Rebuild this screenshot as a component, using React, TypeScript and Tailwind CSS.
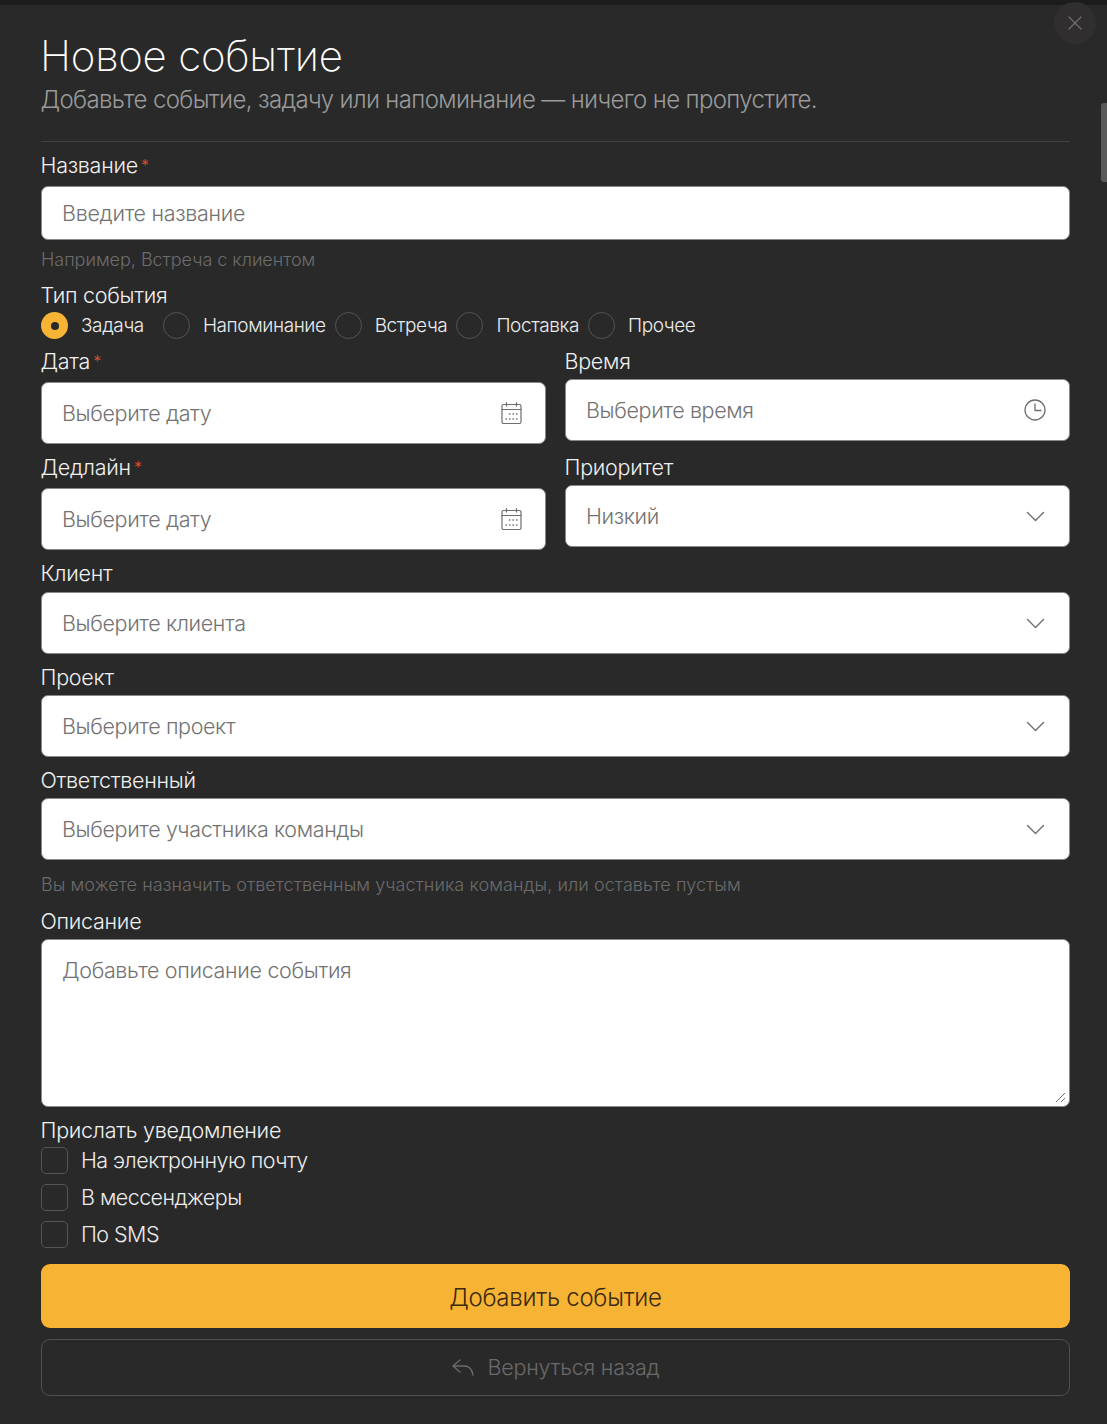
import React from "react";

const Chevron = () => (
  <svg width="20" height="12" viewBox="0 0 20 12" fill="none" stroke="#6f6f6f" strokeWidth="1.4" strokeLinecap="round" strokeLinejoin="round">
    <path d="M1.5 2.5l8 8 8-8" />
  </svg>
);

const Calendar = () => (
  <svg width="22" height="24" viewBox="0 0 22 24" fill="none" stroke="#6f6f6f" strokeWidth="1.2" strokeLinecap="round">
    <rect x="2" y="3.5" width="19" height="19" rx="1.5" />
    <path d="M2 8.5h19M6.5 1.5v3.5M16.5 1.5v3.5" />
    <path d="M9.5 13h.5M13 13h.5M16.5 13h.5M6 18h.5M9.5 18h.5M13 18h.5M16.5 18h.5" strokeWidth="1.4" />
  </svg>
);

const Clock = () => (
  <svg width="22" height="22" viewBox="0 0 22 22" fill="none" stroke="#6f6f6f" strokeWidth="1.3" strokeLinecap="round" strokeLinejoin="round">
    <circle cx="11" cy="11" r="10" />
    <path d="M11 5v6.5h6" />
  </svg>
);

const Label = ({ text, req, cls = "" }: { text: string; req?: boolean; cls?: string }) => (
  <div className={`-ml-[0.5px] h-[24px] text-[21.5px] leading-[24px] font-light text-[#f0f0f0] tracking-[-0.27px] ${cls}`}>
    {text}
    {req && <span className="ml-[3px] text-[#e2522f] text-[16px] align-[2px]">*</span>}
  </div>
);

const Box = ({ text, icon, cls = "" }: { text: string; icon?: React.ReactNode; cls?: string }) => (
  <div className={`flex h-[62px] items-center justify-between rounded-[7px] border border-[#8a8a8a] bg-white pl-[20px] pr-[23px] ${cls}`}>
    <span className="text-[21.5px] font-light text-[#737373] tracking-[-0.37px]">{text}</span>
    {icon}
  </div>
);

const Radio = ({ text, on, cls = "" }: { text: string; on?: boolean; cls?: string }) => (
  <div className={`flex items-center gap-[13px] ${cls}`}>
    {on ? (
      <span className="flex h-[27px] w-[27px] items-center justify-center rounded-full bg-[#f7b334]">
        <span className="h-[8px] w-[8px] rounded-full bg-[#292929]" />
      </span>
    ) : (
      <span className="h-[27px] w-[27px] rounded-full border border-[#555555]" />
    )}
    <span className="pt-[1px] text-[19px] font-light text-[#ececec] tracking-[-0.4px]">{text}</span>
  </div>
);

const Check = ({ text }: { text: string }) => (
  <div className="flex h-[27px] items-center gap-[13px]">
    <span className="h-[27px] w-[27px] rounded-[5px] border border-[#555555]" />
    <span className="text-[21.5px] font-light text-[#ececec] tracking-[-0.55px]">{text}</span>
  </div>
);

export default function App() {
  return (
    <div className="relative h-[1424px] w-[1107px] overflow-hidden bg-[#292929] font-['Inter',sans-serif]">
      <div className="h-[5px] bg-[#1c1c1c]" />
      <div className="absolute right-[11px] top-[2px] flex h-[42px] w-[42px] items-center justify-center rounded-full bg-[#302e2e]">
        <svg width="16" height="16" viewBox="0 0 16 16" stroke="#6e6e6e" strokeWidth="1.3" strokeLinecap="round">
          <path d="M2 2l12 12M14 2L2 14" />
        </svg>
      </div>
      <div className="absolute right-0 top-[103px] h-[79px] w-[6px] rounded-l-[3px] bg-[#5a5a5a]" />

      <div className="flex flex-col pl-[41px] pr-[37px]">
        <h1 className="-ml-[1px] mt-[25px] h-[52px] text-[42px] font-extralight leading-[52px] text-white tracking-[-0.22px]">Новое событие</h1>
        <p className="-ml-[0.5px] mt-[2px] h-[32px] text-[24px] font-light leading-[32px] text-[#9a9a9a] tracking-[-0.64px]">
          Добавьте событие, задачу или напоминание — ничего не пропустите.
        </p>
        <div className="mt-[25px] h-[1px] bg-[#414141]" />

        <Label text="Название" req cls="mt-[11px]" />
        <div className="mt-[9px] flex h-[54px] items-center rounded-[7px] border border-[#8a8a8a] bg-white pl-[20px]">
          <span className="text-[21.5px] font-light text-[#737373] tracking-[-0.3px]">Введите название</span>
        </div>
        <div className="mt-[9px] h-[22px] text-[18px] font-light leading-[22px] text-[#6c6c6c] tracking-[-0.03px]">Например, Встреча с клиентом</div>

        <Label text="Тип события" cls="mt-[12px]" />
        <div className="mt-[5px] flex h-[27px] items-center gap-[9px]">
          <Radio text="Задача" on cls="mr-[10px]" />
          <Radio text="Напоминание" />
          <Radio text="Встреча" />
          <Radio text="Поставка" />
          <Radio text="Прочее" />
        </div>

        <div className="mt-[10px] grid grid-cols-2 gap-x-[19px]">
          <div>
            <Label text="Дата" req />
            <Box text="Выберите дату" icon={<Calendar />} cls="mt-[9px]" />
          </div>
          <div>
            <Label text="Время" />
            <Box text="Выберите время" icon={<Clock />} cls="mt-[6px]" />
          </div>
        </div>
        <div className="mt-[11px] grid grid-cols-2 gap-x-[19px]">
          <div>
            <Label text="Дедлайн" req />
            <Box text="Выберите дату" icon={<Calendar />} cls="mt-[9px]" />
          </div>
          <div>
            <Label text="Приоритет" />
            <Box text="Низкий" icon={<Chevron />} cls="mt-[6px]" />
          </div>
        </div>

        <Label text="Клиент" cls="mt-[11px]" />
        <Box text="Выберите клиента" icon={<Chevron />} cls="mt-[7px]" />
        <Label text="Проект" cls="mt-[11px]" />
        <Box text="Выберите проект" icon={<Chevron />} cls="mt-[6px]" />
        <Label text="Ответственный" cls="mt-[11px]" />
        <Box text="Выберите участника команды" icon={<Chevron />} cls="mt-[6px]" />
        <div className="mt-[14px] h-[22px] text-[18px] font-light leading-[22px] text-[#6c6c6c] tracking-[0.06px]">
          Вы можете назначить ответственным участника команды, или оставьте пустым
        </div>

        <Label text="Описание" cls="mt-[13px]" />
        <div className="relative mt-[6px] h-[168px] rounded-[7px] border border-[#8a8a8a] bg-white pl-[20px] pt-[15px]">
          <span className="text-[21.5px] font-light leading-[30px] text-[#737373] tracking-[-0.33px]">Добавьте описание события</span>
          <svg className="absolute bottom-[3px] right-[3px]" width="11" height="11" viewBox="0 0 11 11" stroke="#777777" strokeWidth="1">
            <path d="M1 10l9-9M6 10l4-4" />
          </svg>
        </div>

        <Label text="Прислать уведомление" cls="mt-[11px]" />
        <div className="mt-[5px] flex flex-col gap-[10px]">
          <Check text="На электронную почту" />
          <Check text="В мессенджеры" />
          <Check text="По SMS" />
        </div>

        <div className="mt-[16px] flex h-[64px] items-center justify-center rounded-[9px] bg-[#f7b334] pt-[3px] text-[24px] font-light text-[#3a2a10] tracking-[-0.25px]">
          Добавить событие
        </div>
        <div className="mt-[11px] flex h-[57px] items-center justify-center gap-[12px] rounded-[9px] border border-[#505050] text-[21.5px] font-light text-[#6a6a6a] tracking-[-0.2px]">
          <svg width="24" height="20" viewBox="0 0 24 20" fill="none" stroke="#6a6a6a" strokeWidth="1.4" strokeLinecap="round" strokeLinejoin="round">
            <path d="M9 2L2 8l7 6M2 8h11c5 0 8 3 9 9" />
          </svg>
          Вернуться назад
        </div>
      </div>
    </div>
  );
}
